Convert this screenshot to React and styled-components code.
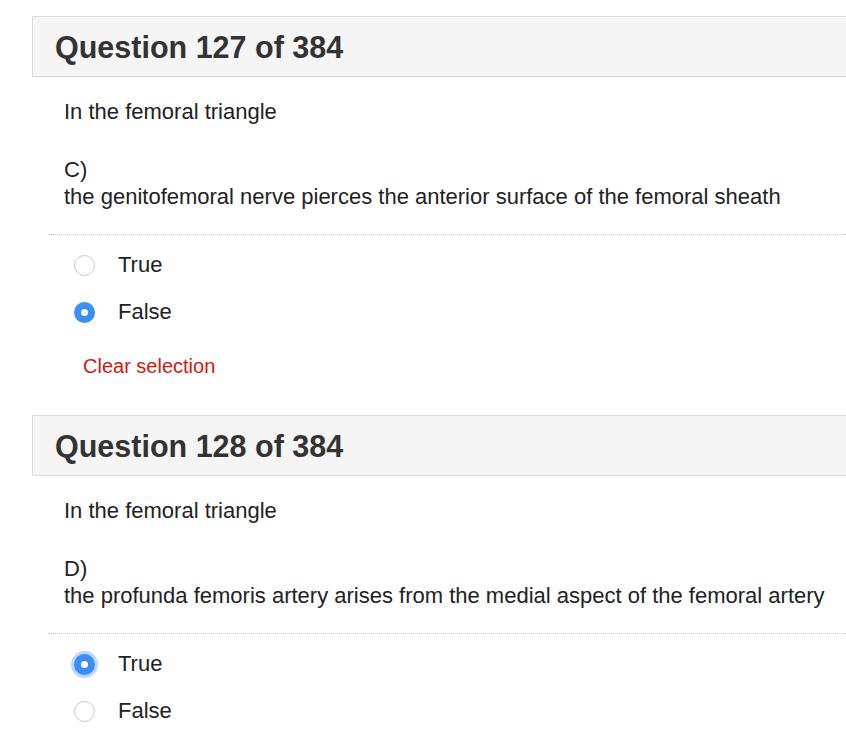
import React, { useState } from "react";
import styled, { createGlobalStyle } from "styled-components";

const GlobalStyle = createGlobalStyle`
	html, body {
		margin: 0;
		padding: 0;
		background: #fff;
		overflow-x: hidden;
	}
	body {
		font-family: "Liberation Sans", Helvetica, Arial, sans-serif;
		color: #222;
	}
`;

const questions = [
	{
		number: 127,
		stem: "In the femoral triangle",
		label: "C)",
		text: "the genitofemoral nerve pierces the anterior surface of the femoral sheath",
		answer: "False",
		focused: false,
		showClear: true
	},
	{
		number: 128,
		stem: "In the femoral triangle",
		label: "D)",
		text: "the profunda femoris artery arises from the medial aspect of the femoral artery",
		answer: "True",
		focused: true,
		showClear: false
	}
];

const Page = styled.div`
	padding: 16px 0 0 32px;
`;

const QuestionBlock = styled.section`
	margin-bottom: 37px;
`;

const Header = styled.div`
	background: #f5f5f5;
	border: 1px solid #dcdcdc;
	border-right: none;
	padding: 13px 22px 12px;
	h2 {
		margin: 0;
		font-size: 30.5px;
		line-height: 34px;
		font-weight: bold;
		color: #333;
	}
`;

const Body = styled.div`
	padding: 0 0 0 16px;
`;

const Prompt = styled.div`
	padding: 21px 0 0 16px;
	font-size: 22px;
	line-height: 27px;
	p {
		margin: 0 0 31px;
	}
	p:last-child {
		margin-bottom: 0;
	}
`;

const Divider = styled.div`
	margin-top: 24px;
	border-top: 1px dotted #c8c8c8;
`;

const Options = styled.div`
	padding: 18px 0 0 26px;
	display: flex;
	flex-direction: column;
	gap: 23px;
`;

const Option = styled.label`
	display: flex;
	align-items: center;
	gap: 23px;
	font-size: 22px;
	line-height: 24px;
	color: #222;
	cursor: pointer;
`;

const Radio = styled.span`
	width: 21px;
	height: 21px;
	box-sizing: border-box;
	border-radius: 50%;
	flex: none;
	display: flex;
	align-items: center;
	justify-content: center;
	border: ${p => (p.$checked ? "none" : "1px solid #c9c9c9")};
	background: ${p => (p.$checked ? "#3a8ef6" : "#fff")};
	box-shadow: ${p => (p.$focused ? "0 0 0 3px rgba(58, 142, 246, 0.35)" : "none")};
	&::after {
		content: "";
		display: ${p => (p.$checked ? "block" : "none")};
		width: 7px;
		height: 7px;
		border-radius: 50%;
		background: #fff;
	}
`;

const ClearLink = styled.a`
	display: inline-block;
	margin: 30px 0 0 35px;
	font-size: 20px;
	line-height: 24px;
	color: #d4190c;
	text-decoration: none;
	cursor: pointer;
`;

const Question = ({ q }) => {
	const [value, setValue] = useState(q.answer);
	return (
		<QuestionBlock>
			<Header>
				<h2>
					Question {q.number} of 384
				</h2>
			</Header>
			<Body>
				<Prompt>
					<p>{q.stem}</p>
					<p>
						{q.label}
						<br />
						{q.text}
					</p>
				</Prompt>
				<Divider />
				<Options>
					{["True", "False"].map(opt => (
						<Option key={opt} onClick={() => setValue(opt)}>
							<Radio $checked={value == opt} $focused={q.focused && value == opt} />
							{opt}
						</Option>
					))}
				</Options>
				{q.showClear && <ClearLink onClick={() => setValue(null)}>Clear selection</ClearLink>}
			</Body>
		</QuestionBlock>
	);
};

export default function App() {
	return (
		<Page>
			<GlobalStyle />
			{questions.map(q => (
				<Question key={q.number} q={q} />
			))}
		</Page>
	);
}
